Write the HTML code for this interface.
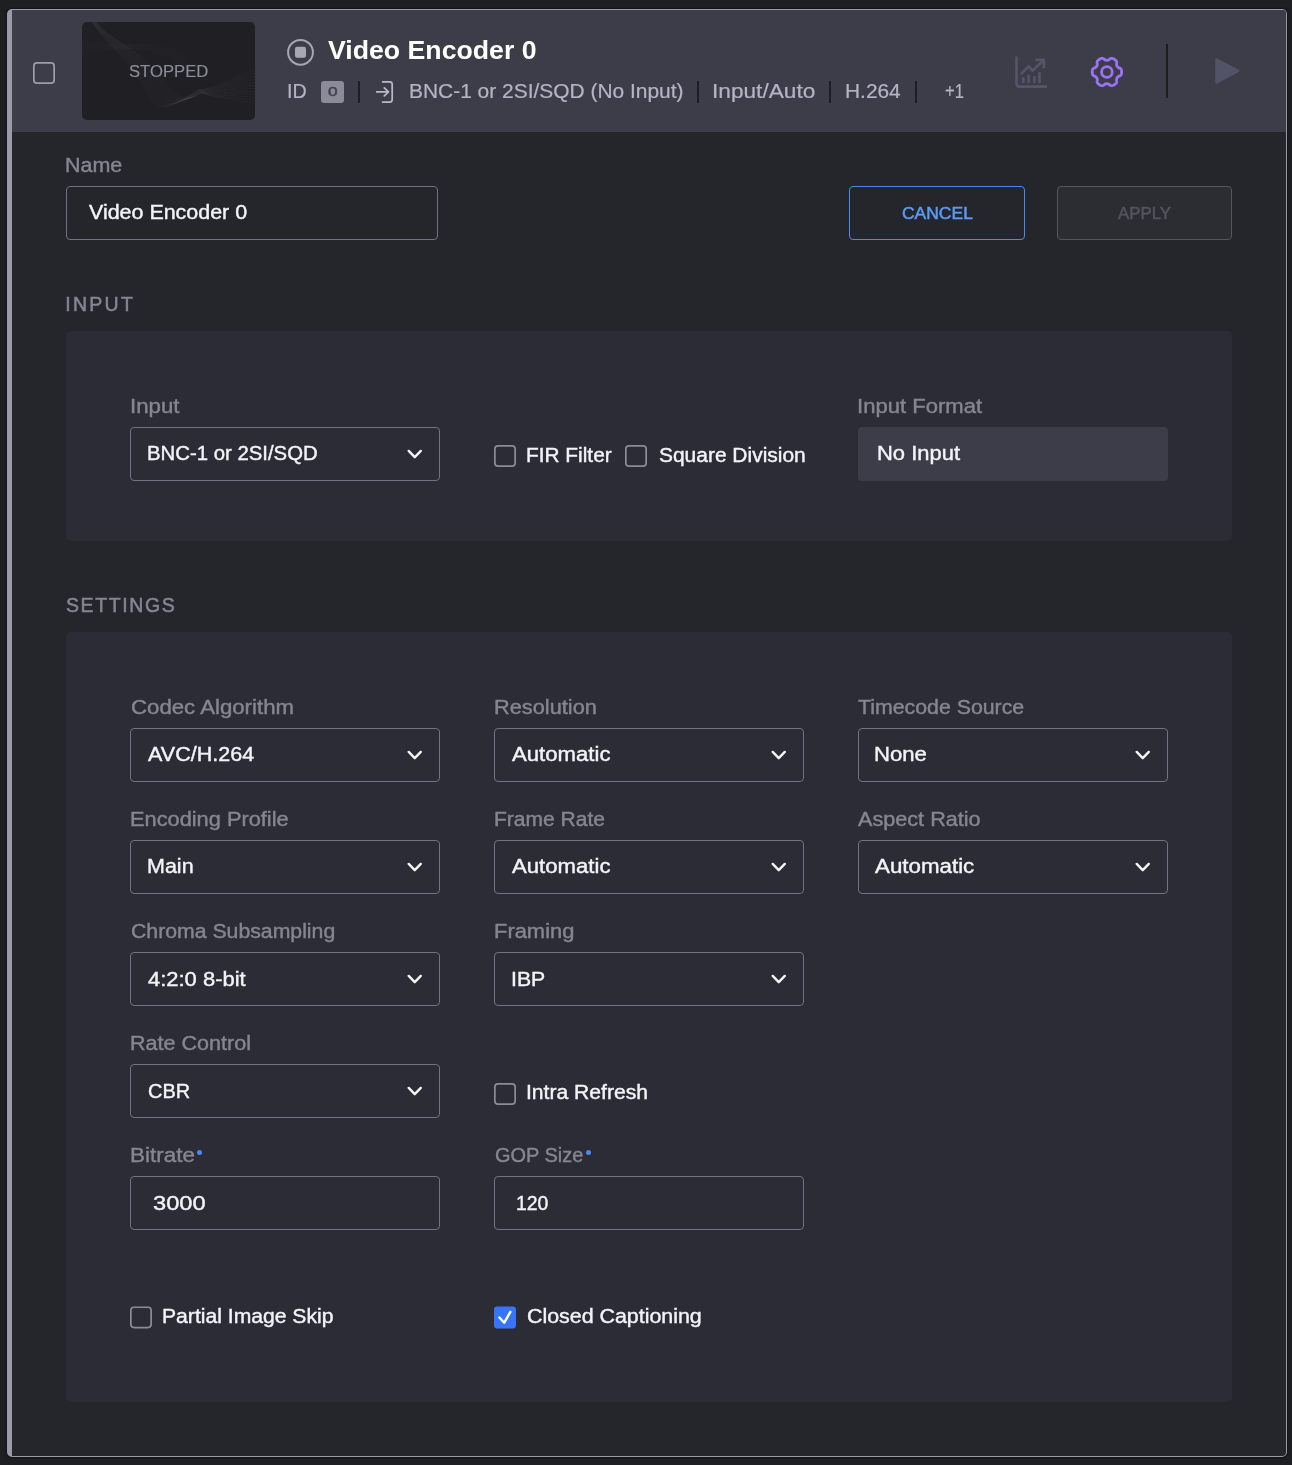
<!DOCTYPE html>
<html>
<head>
<meta charset="utf-8">
<title>Video Encoder 0</title>
<style>
html,body{margin:0;padding:0;}
body{width:1292px;height:1465px;background:#1e1f22;overflow:hidden;position:relative;
  font-family:"Liberation Sans",sans-serif;color:#f0f0f5;}
*{box-sizing:border-box;}
.abs{position:absolute;}
#card{position:absolute;left:7px;top:9px;width:1280px;height:1448px;background:#25262b;
  border:1px solid #9a9aa8;border-left:5px solid #9a9aa8;border-radius:5px;
  box-shadow:0 0 2px 0.5px rgba(0,0,0,.4);overflow:hidden;}
#in{position:absolute;left:-12px;top:-10px;width:1292px;height:1465px;will-change:transform;}
#hdr{position:absolute;left:12px;top:10px;width:1274px;height:122px;background:#3d3d4a;}
.t{position:absolute;white-space:nowrap;line-height:1;transform-origin:0 0;}
.sep{position:absolute;width:2px;height:22px;background:#1d1d23;top:81px;}
.box{position:absolute;width:310px;height:54px;border:1px solid #717188;border-radius:4px;}
.panel{position:absolute;left:66px;width:1166px;background:#2b2c35;border-radius:5px;}
.dot{position:absolute;width:5px;height:5px;border-radius:50%;background:#4d86f7;}
svg{position:absolute;overflow:visible;}
</style>
</head>
<body>
<div id="card"><div id="in">
<div id="hdr"></div>

<div class="abs" style="left:82px;top:22px;width:173px;height:98px;background:#1f1f24;border-radius:5px;overflow:hidden;">
<svg width="173" height="98" viewBox="0 0 173 98" style="left:0;top:0;"><g fill="none" stroke="#ffffff" stroke-width="0.7"><path stroke-opacity="0.055" d="M10.0 0 C22.0 20.0 40.0 30.0 57.0 56.0 S68.0 100.0 116.0 68.0 M10.4 0 C22.5 19.8 40.9 29.5 58.1 54.9 S70.5 98.7 116.4 68.3 M10.7 0 C23.1 19.6 41.8 28.9 59.2 53.8 S73.1 97.5 116.7 68.5 M11.1 0 C23.6 19.5 42.7 28.4 60.3 52.7 S75.6 96.2 117.1 68.8 M11.5 0 C24.2 19.3 43.6 27.8 61.4 51.6 S78.2 94.9 117.5 69.1 M11.8 0 C24.7 19.1 44.5 27.3 62.5 50.5 S80.7 93.6 117.8 69.4 M12.2 0 C25.3 18.9 45.5 26.7 63.5 49.5 S83.3 92.4 118.2 69.6 M12.5 0 C25.8 18.7 46.4 26.2 64.6 48.4 S85.8 91.1 118.5 69.9 M12.9 0 C26.4 18.5 47.3 25.6 65.7 47.3 S88.4 89.8 118.9 70.2 M13.3 0 C26.9 18.4 48.2 25.1 66.8 46.2 S90.9 88.5 119.3 70.5 M13.6 0 C27.5 18.2 49.1 24.5 67.9 45.1 S93.5 87.3 119.6 70.7 M14.0 0 C28.0 18.0 50.0 24.0 69.0 44.0 S96.0 86.0 120.0 71.0"/><path stroke-opacity="0.05" d="M116.0 68.0 C135.0 66.0 155.0 54.0 173 48.0 M116.4 68.3 C135.2 67.1 155.0 56.0 173 51.1 M116.7 68.5 C135.4 68.2 155.0 58.0 173 54.2 M117.1 68.8 C135.5 69.3 155.0 60.0 173 57.3 M117.5 69.1 C135.7 70.4 155.0 62.0 173 60.4 M117.8 69.4 C135.9 71.5 155.0 64.0 173 63.5 M118.2 69.6 C136.1 72.5 155.0 66.0 173 66.5 M118.5 69.9 C136.3 73.6 155.0 68.0 173 69.6 M118.9 70.2 C136.5 74.7 155.0 70.0 173 72.7 M119.3 70.5 C136.6 75.8 155.0 72.0 173 75.8 M119.6 70.7 C136.8 76.9 155.0 74.0 173 78.9 M120.0 71.0 C137.0 78.0 155.0 76.0 173 82.0"/><path stroke-opacity="0.022" d="M0.0 18.0 C40.0 30.0 80.0 10.0 108.0 40.0 M0.0 19.3 C40.0 29.5 80.5 10.9 108.4 41.8 M0.0 20.5 C40.0 28.9 81.1 11.8 108.7 43.6 M0.0 21.8 C40.0 28.4 81.6 12.7 109.1 45.5 M0.0 23.1 C40.0 27.8 82.2 13.6 109.5 47.3 M0.0 24.4 C40.0 27.3 82.7 14.5 109.8 49.1 M0.0 25.6 C40.0 26.7 83.3 15.5 110.2 50.9 M0.0 26.9 C40.0 26.2 83.8 16.4 110.5 52.7 M0.0 28.2 C40.0 25.6 84.4 17.3 110.9 54.5 M0.0 29.5 C40.0 25.1 84.9 18.2 111.3 56.4 M0.0 30.7 C40.0 24.5 85.5 19.1 111.6 58.2 M0.0 32.0 C40.0 24.0 86.0 20.0 112.0 60.0"/></g></svg>
</div>

<div class="sep" style="left:358px;"></div>
<div class="sep" style="left:697px;"></div>
<div class="sep" style="left:829px;"></div>
<div class="sep" style="left:915px;"></div>
<div class="abs" style="left:321px;top:81px;width:23px;height:22px;background:#8b8b99;border-radius:3px;"></div>
<div class="abs" style="left:1166px;top:44px;width:2px;height:54px;background:#1c1c21;"></div>

<!-- name row -->
<div class="box" style="left:66px;top:186px;width:372px;"></div>
<div class="abs" style="left:849px;top:186px;width:176px;height:54px;border:1px solid #4d88f5;border-radius:4px;"></div>
<div class="abs" style="left:1057px;top:186px;width:175px;height:54px;border:1px solid #55555d;border-radius:4px;background:#2c2d32;"></div>

<!-- input panel -->
<div class="panel" style="top:331px;height:210px;"></div>
<div class="box" style="left:130px;top:427px;"></div>
<div class="abs" style="left:858px;top:427px;width:310px;height:54px;background:#3d3d4a;border-radius:4px;"></div>

<!-- settings panel -->
<div class="panel" style="top:632px;height:770px;"></div>
<div class="box" style="left:130px;top:728px;"></div>
<div class="box" style="left:494px;top:728px;"></div>
<div class="box" style="left:858px;top:728px;"></div>
<div class="box" style="left:130px;top:840px;"></div>
<div class="box" style="left:494px;top:840px;"></div>
<div class="box" style="left:858px;top:840px;"></div>
<div class="box" style="left:130px;top:952px;"></div>
<div class="box" style="left:494px;top:952px;"></div>
<div class="box" style="left:130px;top:1064px;"></div>
<div class="box" style="left:130px;top:1176px;"></div>
<div class="box" style="left:494px;top:1176px;"></div>
<div class="dot" style="left:197px;top:1150px;"></div>
<div class="dot" style="left:586px;top:1150px;"></div>

<svg width="1292" height="1465" viewBox="0 0 1292 1465" style="left:0;top:0;">
<circle cx="300.5" cy="52.3" r="12.4" fill="none" stroke="#a6a6b4" stroke-width="2"/>
<rect x="295" y="46.8" width="11" height="11" rx="2" fill="#a6a6b4"/>
<g fill="none" stroke="#b9b9cc" stroke-width="1.7" stroke-linecap="round" stroke-linejoin="round"><path d="M382.6 81.8 H389.7 Q392.2 81.8 392.2 84.3 V99.6 Q392.2 102.1 389.7 102.1 H382.6"/><path d="M376.7 91.9 H388.3 M384.3 87.9 L388.5 91.9 L384.3 95.9"/></g>
<g fill="none" stroke="#54556a" stroke-width="2.6" stroke-linecap="round" stroke-linejoin="round"><path d="M1016.5 57.6 V83.4 Q1016.5 86.6 1019.7 86.6 H1046"/><path d="M1021.6 73.4 L1028.6 66.4 L1032.7 70.6 L1043.4 60.3"/><path d="M1036.6 59.9 H1043.9 V67.2"/><path d="M1023.3 78.2 V82 M1028.6 75.8 V82 M1034.4 77.2 V82 M1039.5 73.1 V82"/></g>
<g fill="none" stroke="#9b72f3" stroke-width="2.8" stroke-linejoin="round"><path d="M1121.60 72.00 L1121.56 71.04 L1121.43 70.09 L1121.14 69.17 L1120.41 68.38 L1119.10 67.86 L1118.06 67.38 L1117.49 66.78 L1117.07 66.13 L1116.72 65.44 L1116.49 64.64 L1116.59 63.51 L1116.79 62.11 L1116.47 61.08 L1115.82 60.37 L1115.06 59.78 L1114.25 59.27 L1113.40 58.82 L1112.51 58.46 L1111.57 58.25 L1110.52 58.49 L1109.41 59.37 L1108.48 60.02 L1107.67 60.22 L1106.90 60.25 L1106.13 60.22 L1105.32 60.02 L1104.39 59.37 L1103.28 58.49 L1102.23 58.25 L1101.29 58.46 L1100.40 58.82 L1099.55 59.27 L1098.74 59.78 L1097.98 60.37 L1097.33 61.08 L1097.01 62.11 L1097.21 63.51 L1097.31 64.64 L1097.08 65.44 L1096.73 66.13 L1096.31 66.78 L1095.74 67.38 L1094.70 67.86 L1093.39 68.38 L1092.66 69.17 L1092.37 70.09 L1092.24 71.04 L1092.20 72.00 L1092.24 72.96 L1092.37 73.91 L1092.66 74.83 L1093.39 75.62 L1094.70 76.14 L1095.74 76.62 L1096.31 77.22 L1096.73 77.87 L1097.08 78.56 L1097.31 79.36 L1097.21 80.49 L1097.01 81.89 L1097.33 82.92 L1097.98 83.63 L1098.74 84.22 L1099.55 84.73 L1100.40 85.18 L1101.29 85.54 L1102.23 85.75 L1103.28 85.51 L1104.39 84.63 L1105.32 83.98 L1106.13 83.78 L1106.90 83.75 L1107.67 83.78 L1108.48 83.98 L1109.41 84.63 L1110.52 85.51 L1111.57 85.75 L1112.51 85.54 L1113.40 85.18 L1114.25 84.73 L1115.06 84.22 L1115.82 83.63 L1116.47 82.92 L1116.79 81.89 L1116.59 80.49 L1116.49 79.36 L1116.72 78.56 L1117.07 77.87 L1117.49 77.22 L1118.06 76.62 L1119.10 76.14 L1120.41 75.62 L1121.14 74.83 L1121.43 73.91 L1121.56 72.96 Z"/><circle cx="1106.9" cy="72.0" r="5.35"/></g>
<path d="M1216.5 59.6 L1238.2 70.9 L1216.5 82.4 Z" fill="#525366" stroke="#525366" stroke-width="2.6" stroke-linejoin="round"/>
<g fill="none" stroke="#f4f4f8" stroke-width="2.4" stroke-linecap="round" stroke-linejoin="round"><path d="M408.7 450.9 l6.05 6.3 l6.05 -6.3"/><path d="M408.7 751.9 l6.05 6.3 l6.05 -6.3"/><path d="M772.7 751.9 l6.05 6.3 l6.05 -6.3"/><path d="M1136.7 751.9 l6.05 6.3 l6.05 -6.3"/><path d="M408.7 863.9 l6.05 6.3 l6.05 -6.3"/><path d="M772.7 863.9 l6.05 6.3 l6.05 -6.3"/><path d="M1136.7 863.9 l6.05 6.3 l6.05 -6.3"/><path d="M408.7 975.9 l6.05 6.3 l6.05 -6.3"/><path d="M772.7 975.9 l6.05 6.3 l6.05 -6.3"/><path d="M408.7 1087.9 l6.05 6.3 l6.05 -6.3"/></g>
<rect x="33.85" y="62.85" width="20.3" height="20.3" rx="3.2" fill="none" stroke="#9c9cab" stroke-width="1.7"/>
<rect x="494.85" y="445.85" width="20.3" height="20.3" rx="3.2" fill="none" stroke="#8b8b9a" stroke-width="1.7"/>
<rect x="625.85" y="445.85" width="20.3" height="20.3" rx="3.2" fill="none" stroke="#8b8b9a" stroke-width="1.7"/>
<rect x="494.85" y="1083.85" width="20.3" height="20.3" rx="3.2" fill="none" stroke="#8b8b9a" stroke-width="1.7"/>
<rect x="130.85" y="1307.25" width="20.3" height="20.3" rx="3.2" fill="none" stroke="#8b8b9a" stroke-width="1.7"/>
<rect x="494" y="1306.4" width="22" height="22" rx="3.2" fill="#3875f6"/>
<path d="M499.4 1317.5 L504.3 1322.7 L510.4 1311.9" fill="none" stroke="#ffffff" stroke-width="2.4" stroke-linecap="round" stroke-linejoin="round"/>
</svg>


<span class="t" style="left:128.8px;top:63px;font-size:17.2px;color:#8d8d9a;transform:scaleX(0.9691);-webkit-text-stroke:0.15px #8d8d9a;">STOPPED</span>
<span class="t" style="left:327.6px;top:37px;font-size:26.5px;color:#ffffff;transform:scaleX(1.0067);font-weight:bold;">Video Encoder 0</span>
<span class="t" style="left:287.36px;top:81px;font-size:20px;color:#b4b4c6;transform:scaleX(0.9862);-webkit-text-stroke:0.2px #b4b4c6;">ID</span>
<span class="t" style="left:409.05px;top:81px;font-size:20px;color:#b4b4c6;transform:scaleX(1.0466);-webkit-text-stroke:0.2px #b4b4c6;">BNC-1 or 2SI/SQD (No Input)</span>
<span class="t" style="left:711.72px;top:81px;font-size:20px;color:#b4b4c6;transform:scaleX(1.1332);-webkit-text-stroke:0.2px #b4b4c6;">Input/Auto</span>
<span class="t" style="left:844.81px;top:81px;font-size:20px;color:#b4b4c6;transform:scaleX(1.0441);-webkit-text-stroke:0.2px #b4b4c6;">H.264</span>
<span class="t" style="left:944.6px;top:81px;font-size:20px;color:#b4b4c6;transform:scaleX(0.8289);-webkit-text-stroke:0.2px #b4b4c6;">+1</span>
<span class="t" style="left:327.9px;top:86px;font-size:12.3px;color:#42424e;transform:scaleX(1.4000);-webkit-text-stroke:0.45px #42424e;">0</span>
<span class="t" style="left:65.4px;top:156px;font-size:19.5px;color:#868693;transform:scaleX(1.1012);-webkit-text-stroke:0.4px #868693;">Name</span>
<span class="t" style="left:89.1px;top:203px;font-size:19.5px;color:#f3f3f8;transform:scaleX(1.0994);-webkit-text-stroke:0.4px #f3f3f8;">Video Encoder 0</span>
<span class="t" style="left:901.9px;top:206px;font-size:16.6px;color:#5b9bf5;transform:scaleX(1.0524);-webkit-text-stroke:0.5px #5b9bf5;">CANCEL</span>
<span class="t" style="left:1118.1px;top:206px;font-size:16.6px;color:#54545f;transform:scaleX(1.0134);-webkit-text-stroke:0.5px #54545f;">APPLY</span>
<span class="t" style="left:65.35px;top:295px;font-size:19.5px;color:#868693;letter-spacing:2.24px;-webkit-text-stroke:0.5px #868693;">INPUT</span>
<span class="t" style="left:65.9px;top:596px;font-size:19.5px;color:#868693;letter-spacing:1.63px;-webkit-text-stroke:0.5px #868693;">SETTINGS</span>
<span class="t" style="left:129.71px;top:397px;font-size:19.5px;color:#868693;transform:scaleX(1.1420);-webkit-text-stroke:0.4px #868693;">Input</span>
<span class="t" style="left:146.81px;top:444px;font-size:19.5px;color:#f3f3f8;transform:scaleX(1.0431);-webkit-text-stroke:0.4px #f3f3f8;">BNC-1 or 2SI/SQD</span>
<span class="t" style="left:526.43px;top:446px;font-size:19.5px;color:#f3f3f8;transform:scaleX(1.0688);-webkit-text-stroke:0.4px #f3f3f8;">FIR Filter</span>
<span class="t" style="left:658.6px;top:446px;font-size:19.5px;color:#f3f3f8;transform:scaleX(1.0743);-webkit-text-stroke:0.4px #f3f3f8;">Square Division</span>
<span class="t" style="left:856.97px;top:397px;font-size:19.5px;color:#868693;transform:scaleX(1.1310);-webkit-text-stroke:0.4px #868693;">Input Format</span>
<span class="t" style="left:877.22px;top:444px;font-size:19.5px;color:#f3f3f8;transform:scaleX(1.1262);-webkit-text-stroke:0.4px #f3f3f8;">No Input</span>
<span class="t" style="left:130.85px;top:698px;font-size:19.5px;color:#868693;transform:scaleX(1.1392);-webkit-text-stroke:0.4px #868693;">Codec Algorithm</span>
<span class="t" style="left:129.73px;top:810px;font-size:19.5px;color:#868693;transform:scaleX(1.1170);-webkit-text-stroke:0.4px #868693;">Encoding Profile</span>
<span class="t" style="left:130.85px;top:922px;font-size:19.5px;color:#868693;transform:scaleX(1.0891);-webkit-text-stroke:0.4px #868693;">Chroma Subsampling</span>
<span class="t" style="left:129.74px;top:1034px;font-size:19.5px;color:#868693;transform:scaleX(1.1055);-webkit-text-stroke:0.4px #868693;">Rate Control</span>
<span class="t" style="left:129.7px;top:1146px;font-size:19.5px;color:#868693;transform:scaleX(1.1520);-webkit-text-stroke:0.4px #868693;">Bitrate</span>
<span class="t" style="left:147.85px;top:745px;font-size:19.5px;color:#f3f3f8;transform:scaleX(1.1044);-webkit-text-stroke:0.4px #f3f3f8;">AVC/H.264</span>
<span class="t" style="left:146.75px;top:857px;font-size:19.5px;color:#f3f3f8;transform:scaleX(1.1022);-webkit-text-stroke:0.4px #f3f3f8;">Main</span>
<span class="t" style="left:147.85px;top:970px;font-size:19.5px;color:#f3f3f8;transform:scaleX(1.1260);-webkit-text-stroke:0.4px #f3f3f8;">4:2:0 8-bit</span>
<span class="t" style="left:147.85px;top:1082px;font-size:19.5px;color:#f3f3f8;transform:scaleX(1.0234);-webkit-text-stroke:0.4px #f3f3f8;">CBR</span>
<span class="t" style="left:153.35px;top:1194px;font-size:19.5px;color:#f3f3f8;transform:scaleX(1.2128);-webkit-text-stroke:0.4px #f3f3f8;">3000</span>
<span class="t" style="left:493.73px;top:698px;font-size:19.5px;color:#868693;transform:scaleX(1.1163);-webkit-text-stroke:0.4px #868693;">Resolution</span>
<span class="t" style="left:493.77px;top:810px;font-size:19.5px;color:#868693;transform:scaleX(1.0786);-webkit-text-stroke:0.4px #868693;">Frame Rate</span>
<span class="t" style="left:493.73px;top:922px;font-size:19.5px;color:#868693;transform:scaleX(1.1239);-webkit-text-stroke:0.4px #868693;">Framing</span>
<span class="t" style="left:494.85px;top:1146px;font-size:19.5px;color:#868693;transform:scaleX(1.0227);-webkit-text-stroke:0.4px #868693;">GOP Size</span>
<span class="t" style="left:511.85px;top:745px;font-size:19.5px;color:#f3f3f8;transform:scaleX(1.1363);-webkit-text-stroke:0.4px #f3f3f8;">Automatic</span>
<span class="t" style="left:511.85px;top:857px;font-size:19.5px;color:#f3f3f8;transform:scaleX(1.1363);-webkit-text-stroke:0.4px #f3f3f8;">Automatic</span>
<span class="t" style="left:510.76px;top:970px;font-size:19.5px;color:#f3f3f8;transform:scaleX(1.0892);-webkit-text-stroke:0.4px #f3f3f8;">IBP</span>
<span class="t" style="left:516.35px;top:1194px;font-size:19.5px;color:#f3f3f8;transform:scaleX(0.9956);-webkit-text-stroke:0.4px #f3f3f8;">120</span>
<span class="t" style="left:858.1px;top:698px;font-size:19.5px;color:#868693;transform:scaleX(1.0929);-webkit-text-stroke:0.4px #868693;">Timecode Source</span>
<span class="t" style="left:858.1px;top:810px;font-size:19.5px;color:#868693;transform:scaleX(1.1092);-webkit-text-stroke:0.4px #868693;">Aspect Ratio</span>
<span class="t" style="left:873.97px;top:745px;font-size:19.5px;color:#f3f3f8;transform:scaleX(1.1346);-webkit-text-stroke:0.4px #f3f3f8;">None</span>
<span class="t" style="left:875.1px;top:857px;font-size:19.5px;color:#f3f3f8;transform:scaleX(1.1449);-webkit-text-stroke:0.4px #f3f3f8;">Automatic</span>
<span class="t" style="left:525.77px;top:1083px;font-size:19.5px;color:#f3f3f8;transform:scaleX(1.0828);-webkit-text-stroke:0.4px #f3f3f8;">Intra Refresh</span>
<span class="t" style="left:161.77px;top:1307px;font-size:19.5px;color:#f3f3f8;transform:scaleX(1.0836);-webkit-text-stroke:0.4px #f3f3f8;">Partial Image Skip</span>
<span class="t" style="left:526.85px;top:1307px;font-size:19.5px;color:#f3f3f8;transform:scaleX(1.0965);-webkit-text-stroke:0.4px #f3f3f8;">Closed Captioning</span>
</div></div>
</body>
</html>
